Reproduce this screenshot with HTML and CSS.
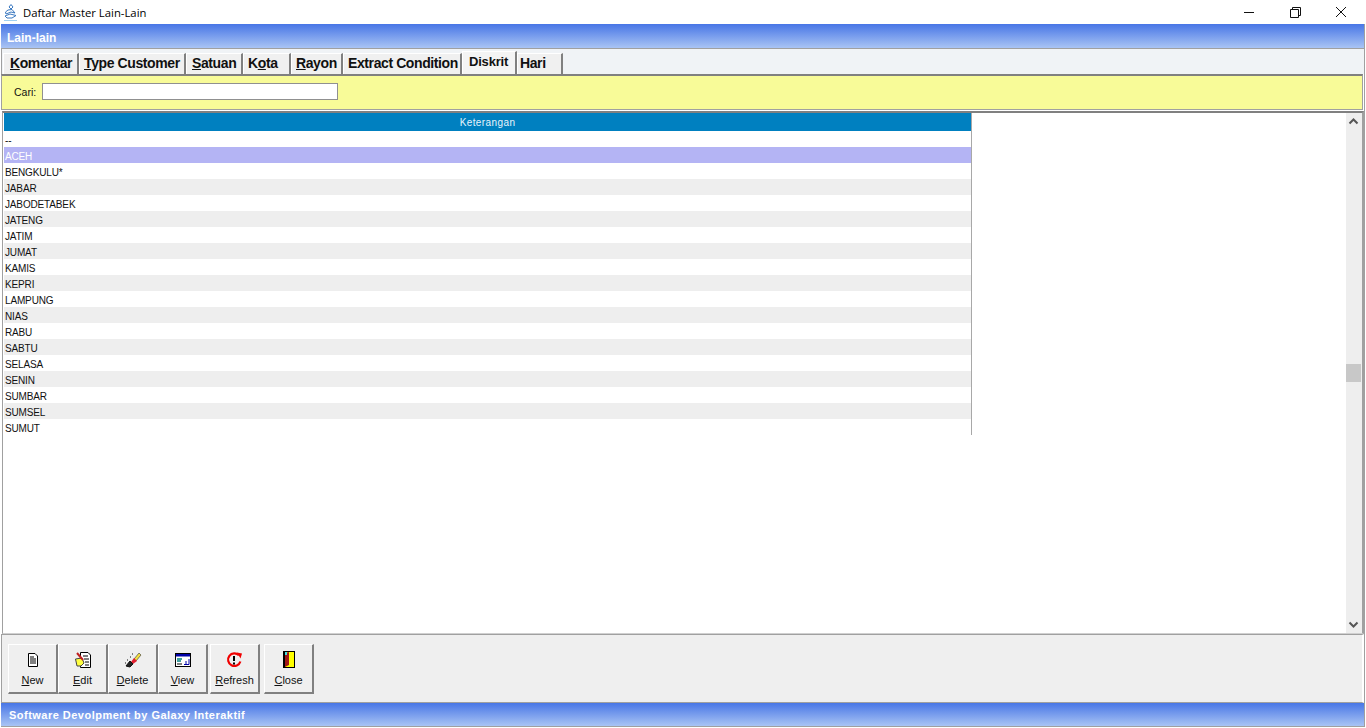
FILE: index.html
```html
<!DOCTYPE html>
<html lang="id">
<head>
  <meta charset="UTF-8" />
  <title>Daftar Master Lain-Lain</title>
  <link rel="stylesheet" href="styles.css">
</head>
<body>
  <div class="titlebar">
    <svg class="app-icon" width="16" height="18" viewBox="0 0 16 18">
      <path d="M8 1.5 L10 4 L8 6 L6 4 Z M5 7 L9 6.5 L12 10 L8 9 L3 11 L2.5 9 Z M2 13 L7 11 L13 12.5 L9 15 L4 15 Z" fill="none" stroke="#3a78c0" stroke-width="1"/>
      <path d="M1 17.5 H14" stroke="#a0d0f0" stroke-width="1"/>
    </svg>
    <span class="app-title">Daftar Master Lain-Lain</span>
    <div class="win-buttons">
      <svg width="46" height="20" viewBox="0 0 46 20"><path d="M18 10.5 H28" stroke="#111" stroke-width="1"/></svg>
      <svg width="46" height="20" viewBox="0 0 46 20"><path d="M18.5 7.5 H26.5 V15.5 H18.5 Z M20.5 7 V5.5 H28.5 V13.5 H27" fill="none" stroke="#111" stroke-width="1"/></svg>
      <svg width="46" height="20" viewBox="0 0 46 20"><path d="M18 5 L28 15 M28 5 L18 15" stroke="#111" stroke-width="1"/></svg>
    </div>
  </div>

  <div class="window">
    <div class="band band-top">Lain-lain</div>

    <div class="tabs">
      <div class="tab tab-komentar"><u>K</u>omentar</div>
      <div class="tab tab-type"><u>T</u>ype Customer</div>
      <div class="tab tab-satuan"><u>S</u>atuan</div>
      <div class="tab tab-kota">K<u>o</u>ta</div>
      <div class="tab tab-rayon"><u>R</u>ayon</div>
      <div class="tab tab-extract">Extract Condition</div>
      <div class="tab tab-diskrit active">Diskrit</div>
      <div class="tab tab-hari">Hari</div>
    </div>

    <div class="search">
      <label class="search-label" for="cari">Cari:</label>
      <input class="search-input" id="cari" type="text" />
    </div>

    <div class="grid-wrap">
      <div class="grid">
        <div class="grid-head">Keterangan</div>
        <div class="row">--</div>
        <div class="row selected">ACEH</div>
        <div class="row">BENGKULU*</div>
        <div class="row alt">JABAR</div>
        <div class="row">JABODETABEK</div>
        <div class="row alt">JATENG</div>
        <div class="row">JATIM</div>
        <div class="row alt">JUMAT</div>
        <div class="row">KAMIS</div>
        <div class="row alt">KEPRI</div>
        <div class="row">LAMPUNG</div>
        <div class="row alt">NIAS</div>
        <div class="row">RABU</div>
        <div class="row alt">SABTU</div>
        <div class="row">SELASA</div>
        <div class="row alt">SENIN</div>
        <div class="row">SUMBAR</div>
        <div class="row alt">SUMSEL</div>
        <div class="row">SUMUT</div>
      </div>
      <div class="scrollbar">
        <svg class="arrow" width="15" height="17" viewBox="0 0 15 17"><path d="M3.5 10.5 L7.5 6.5 L11.5 10.5" fill="none" stroke="#555" stroke-width="2"/></svg>
        <div class="thumb-space"><div class="thumb"></div></div>
        <svg class="arrow" width="15" height="17" viewBox="0 0 15 17"><path d="M3.5 6.5 L7.5 10.5 L11.5 6.5" fill="none" stroke="#555" stroke-width="2"/></svg>
      </div>
    </div>

    <div class="toolbar">
      <button class="btn" type="button">
        <svg width="16" height="18" viewBox="0 0 16 18"><path d="M3.5 2.5 H10 L12.5 5 V15.5 H3.5 Z" fill="#fff" stroke="#000"/><path d="M5 6 H9 M5 8 H11 M5 10 H11 M5 12 H11" stroke="#000"/></svg>
        <span><u>N</u>ew</span>
      </button>
      <button class="btn" type="button">
        <svg width="18" height="18" viewBox="0 0 18 18"><path d="M6.5 1.5 H14 L16.5 4 V16.5 H6.5 Z" fill="#fff" stroke="#000"/><path d="M9 5 H14 M10 8 H15 M11 11 H15 M11 14 H15" stroke="#000"/><path d="M1.5 8 L8 7 L10 12 L7 15 H3 Z" fill="#ffff40" stroke="#444"/><path d="M3 2 L9 9" stroke="#c02020" stroke-width="2"/></svg>
        <span><u>E</u>dit</span>
      </button>
      <button class="btn" type="button">
        <svg width="18" height="18" viewBox="0 0 18 18"><path d="M10 8 L15 2 L17 4 L12 10 Z" fill="#f4e040" stroke="#333" stroke-width=".6"/><path d="M7 11 L10 7 L13 10 L9 13 Z" fill="#e02030"/><path d="M2 15 L6 10 L9 13 L6 16 Z M3 9 L4 9 M1 12 L2 12 M6 6 L7 6 M8 3 L9 3" fill="#222" stroke="#111"/></svg>
        <span><u>D</u>elete</span>
      </button>
      <button class="btn btn-view" type="button">
        <svg width="16" height="18" viewBox="0 0 16 18"><rect x=".5" y="2.5" width="15" height="13" fill="#fff" stroke="#000"/><rect x="1" y="3" width="14" height="2.5" fill="#0000a8"/><path d="M2 8 H7 M2 10 H6" stroke="#008080" stroke-width="1.4"/><path d="M2 13 H7" stroke="#000"/><path d="M9 13.5 H14 V8 M11 13 V10" fill="none" stroke="#0000a8"/></svg>
        <span><u>V</u>iew</span>
      </button>
      <button class="btn btn-refresh" type="button">
        <svg width="17" height="18" viewBox="0 0 17 17"><path d="M13 3.8 A6.3 6.3 0 1 0 14.4 10" fill="none" stroke="#f00000" stroke-width="2.2"/><path d="M11 1 L16 2 L14.5 7 Z" fill="#f00000"/><path d="M8 4.5 V9.5 M8 11 V13" stroke="#000" stroke-width="2"/></svg>
        <span><u>R</u>efresh</span>
      </button>
      <button class="btn" type="button">
        <svg width="12" height="18" viewBox="0 0 12 18"><rect width="12" height="17" fill="#000"/><rect x="2" y="1" width="9" height="15" fill="#ffff00"/><path d="M2 2 L6 1 V14 L2 16 Z" fill="#a01818"/><rect x="2" y="1" width="2" height="3" fill="#40e0e0"/></svg>
        <span><u>C</u>lose</span>
      </button>
    </div>

    <div class="band band-bottom">Software Devolpment by Galaxy Interaktif</div>
  </div>
</body>
</html>
```

FILE: styles.css
```css
html, body { margin: 0; padding: 0; height: 728px; overflow: hidden; background: #fff; }
body { font-family: "Liberation Sans", Arial, sans-serif; display: flex; flex-direction: column; }

.titlebar { height: 24px; display: flex; align-items: center; background: #fff; flex-shrink: 0; }
.app-icon { margin-left: 3px; }
.app-title { margin-left: 4px; font-family: "Open Sans", sans-serif; font-size: 11.3px; color: #000; }
.win-buttons { margin-left: auto; margin-right: 2px; display: flex; }

.window { height: 703px; margin: 0 1px 1px 1px; display: flex; flex-direction: column; border-bottom: 1px solid #a0a0a0; border-right: 1px solid #a0a0a0; box-sizing: border-box; }

.band { flex-shrink: 0; background: linear-gradient(#4876e6, #a9c4f4); color: #fff; font-weight: bold; }
.band-top { height: 24px; line-height: 28px; padding-left: 6px; font-size: 12px; }
.band-bottom { height: 23px; line-height: 24px; padding-left: 8px; font-size: 11px; letter-spacing: .48px; }

.tabs { height: 26px; flex-shrink: 0; display: flex; background: #f0f3f6; border-top: 1px solid #a0a0a0; border-left: 1px solid #a0a0a0; box-sizing: border-box; padding-left: 1px; padding-top: 4px; }
.tab { height: 21px; box-sizing: border-box; padding: 1px 0 0 4px; font-size: 14px; letter-spacing: -.4px; font-weight: bold; color: #111; background: #f0f0f0; border-top: 1px solid #fff; border-left: 1px solid #fff; border-right: 2px solid #808080; white-space: nowrap; overflow: hidden; }
.tab-komentar { width: 76px; padding-left: 6px; }
.tab-type { width: 107px; }
.tab-satuan { width: 57px; padding-left: 5px; }
.tab-kota { width: 48px; }
.tab-rayon { width: 52px; }
.tab-extract { width: 119px; }
.tab-diskrit { width: 55px; }
.tab-hari { width: 46px; padding-left: 2px; }
.tab.active { height: 23px; margin-top: -2px; padding-top: 2px; padding-left: 6px; font-size: 13px; letter-spacing: -.2px; background: #f4f4f4; border-right: 2px solid #808080; }

.search { height: 36px; flex-shrink: 0; display: flex; align-items: center; padding-bottom: 2px; background: #f8fb98; border-top: 2px solid #808080; border-left: 1px solid #a0a0a0; border-right: 1px solid #a0a0a0; border-bottom: 1px solid #a0a0a0; box-sizing: border-box; margin-right: 1px; }
.search-label { font-size: 10.5px; margin-left: 12px; width: 28px; color: #111; }
.search-input { width: 296px; height: 17px; box-sizing: border-box; padding: 0; background: #fff; border: 1px solid #909090; outline: none; }

.grid-wrap { flex: 1; min-height: 0; display: flex; margin: 1px 0 0 1px; padding-left: 1px; border-top: 2px solid #808080; border-left: 1px solid #a0a0a0; border-right: 2px solid #a0a0a0; border-bottom: 1px solid #d0d0d0; background: #fff; overflow: hidden; }
.grid { width: 967px; height: 322px; overflow: hidden; border-right: 1px solid #a8a8a8; flex-shrink: 0; }
.grid-head { height: 18px; line-height: 20px; background: #0080c0; color: #e8f4fb; font-size: 10px; letter-spacing: .4px; text-align: center; overflow: hidden; }
.row { height: 16px; line-height: 19px; padding-left: 1px; font-size: 10px; letter-spacing: -.15px; color: #111; background: #fff; overflow: hidden; }
.row.alt { background: #eeeeee; }
.row.selected { background: #b4b4f4; color: #fff; }

.scrollbar { margin-left: auto; width: 16px; display: flex; flex-direction: column; background: #eeeeee; flex-shrink: 0; }
.arrow { flex-shrink: 0; }
.thumb-space { flex: 1; padding-top: 234px; }
.thumb { width: 15px; height: 18px; background: #c8c8c8; }

.toolbar { height: 69px; flex-shrink: 0; display: flex; align-items: flex-start; background: #efefef; border-top: 1px solid #a0a0a0; border-left: 1px solid #a0a0a0; border-bottom: 1px solid #a0a0a0; border-right: 2px solid #fff; box-sizing: border-box; padding: 9px 0 0 6px; }
.btn { width: 50px; height: 50px; padding: 6px 0 0; margin: 0; display: flex; flex-direction: column; align-items: center; justify-content: flex-start; background: #efefef; border: 0; border-top: 1px solid #fff; border-left: 1px solid #fff; border-right: 2px solid #808080; border-bottom: 2px solid #808080; box-sizing: border-box; font-family: "Liberation Sans", Arial, sans-serif; font-size: 11px; color: #111; }
.btn svg { flex-shrink: 0; }
.btn span { margin-top: 5px; }
.btn-view { margin-right: 2px; }
.btn-refresh { margin-right: 4px; }
```
